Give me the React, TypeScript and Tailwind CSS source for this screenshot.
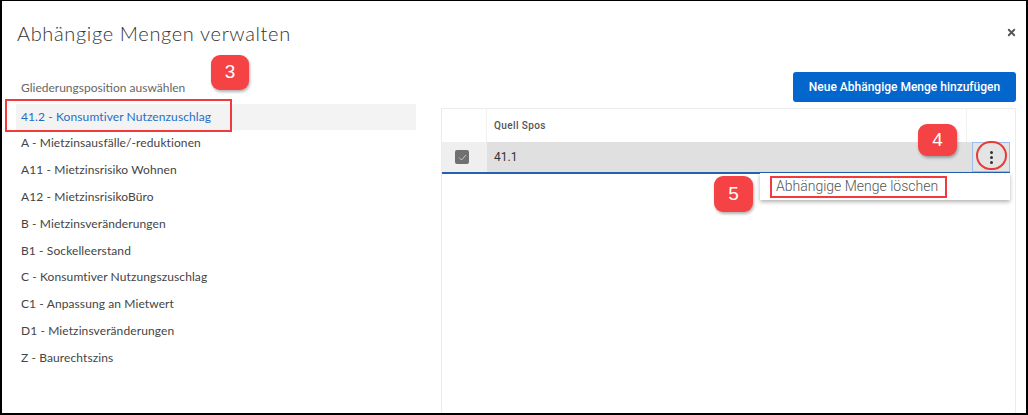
import { X } from 'lucide-react';

const positions = [
  '41.2 - Konsumtiver Nutzenzuschlag',
  'A - Mietzinsausfälle/-reduktionen',
  'A11 - Mietzinsrisiko Wohnen',
  'A12 - MietzinsrisikoBüro',
  'B - Mietzinsveränderungen',
  'B1 - Sockelleerstand',
  'C - Konsumtiver Nutzungszuschlag',
  'C1 - Anpassung an Mietwert',
  'D1 - Mietzinsveränderungen',
  'Z - Baurechtszins',
];

function Badge({ n, className }: { n: number; className: string }) {
  return (
    <div
      className={`absolute flex items-center justify-center rounded-[9px] bg-[#f54245] text-white text-[19px] shadow-[1px_2px_3px_rgba(0,0,0,0.3)] ${className}`}
      style={{ fontFamily: '"Liberation Sans", Arial, sans-serif' }}
    >
      {n}
    </div>
  );
}

export default function App() {
  return (
    <div
      className="relative w-[1028px] h-[415px] overflow-hidden bg-white border-2 border-t border-black flex flex-col"
      style={{ fontFamily: 'Lato, "Open Sans", sans-serif' }}
    >
      <header className="h-[71px] flex items-start justify-between pl-[15px] pr-[9px] shrink-0">
        <h1 className="mt-[18px] text-[20px] leading-[28px] font-light text-[#333] tracking-[0.65px]">
          Abhängige Mengen verwalten
        </h1>
        <button className="mt-[26px] text-[#555]">
          <X className="w-[11px] h-[11px]" strokeWidth={4} />
        </button>
      </header>

      <div className="flex flex-1 min-h-0">
        {/* left: position list */}
        <div className="w-[400px] ml-[14px] shrink-0">
          <div className="h-[32px] flex items-center pl-[5px] text-[12px] text-[#666]">
            Gliederungsposition auswählen
          </div>
          <ul>
            {positions.map((p, i) => (
              <li
                key={p}
                className={`h-[26.8px] flex items-center pl-[5px] text-[12px] tracking-[0.1px] ${
                  i === 0 ? 'h-[26px] bg-[#f3f3f3] text-[#1d6fc6]' : 'text-[#444]'
                }`}
              >
                {p}
              </li>
            ))}
          </ul>
        </div>

        {/* right: dependent quantities table */}
        <div className="ml-[25px] w-[575px] flex flex-col" style={{ fontFamily: 'Roboto, sans-serif' }}>
          <div className="flex justify-end">
            <button className="h-[30px] w-[223px] rounded-[3px] bg-[#0366cc] text-white text-[12px] font-medium">
              Neue Abhängige Menge hinzufügen
            </button>
          </div>
          <div className="mt-[6px] flex-1 border-t border-x border-[#ececec] flex flex-col">
            <div className="h-[33px] flex text-[10px] font-medium text-[#555] tracking-[0.4px]">
              <div className="w-[45px] border-r border-[#f0f0f0]" />
              <div className="flex-1 flex items-center pl-[7px]">Quell Spos</div>
              <div className="w-[49px] border-l border-[#f0f0f0]" />
            </div>
            <div className="h-[32px] flex border-b-2 border-[#2462b0] mr-[5px]">
              <div className="w-[45px] bg-[#efefef] flex items-center pl-[13px]">
                <div className="w-[14px] h-[14px] rounded-[2px] bg-[#707070] flex items-center justify-center">
                  <svg width="9" height="7" viewBox="0 0 9 7" fill="none">
                    <path d="M1 3.5 L3.5 6 L8 1" stroke="#c8c8c8" strokeWidth="1" />
                  </svg>
                </div>
              </div>
              <div className="flex-1 bg-[#e0e0e0] flex items-center pl-[7px] text-[12px] text-[#333]">41.1</div>
              <div className="w-[6px] bg-[#e0e0e0]" />
              <div className="w-[38px] bg-[#e4e4e4] border border-[#9dbdf0] flex items-center justify-center">
                <div className="flex flex-col gap-[2px]">
                  <span className="w-[3px] h-[3px] rounded-full bg-[#333]" />
                  <span className="w-[3px] h-[3px] rounded-full bg-[#333]" />
                  <span className="w-[3px] h-[3px] rounded-full bg-[#333]" />
                </div>
              </div>
            </div>
          </div>
        </div>
      </div>

      {/* annotations and context menu */}
      <div className="absolute left-[3px] top-[98px] w-[227px] h-[33px] border-2 border-[#f2393c]" />
      <Badge n={3} className="left-[209px] top-[54px] w-[38px] h-[35px]" />
      <div className="absolute left-[974px] top-[140px] w-[31px] h-[29px] rounded-full border-2 border-[#e93a3a]" />
      <Badge n={4} className="left-[916px] top-[123px] w-[39px] h-[32px]" />
      <div
        className="absolute left-[758px] top-[172px] w-[250px] h-[27px] bg-white shadow-[0_2px_4px_rgba(0,0,0,0.3)] flex items-center pl-[16px] text-[14px] font-light text-[#555]"
        style={{ fontFamily: 'Roboto, sans-serif' }}
      >
        Abhängige Menge löschen
      </div>
      <div className="absolute left-[768px] top-[175px] w-[177px] h-[22px] border-2 border-[#f2393c]" />
      <Badge n={5} className="left-[712px] top-[175px] w-[39px] h-[36px]" />
    </div>
  );
}
